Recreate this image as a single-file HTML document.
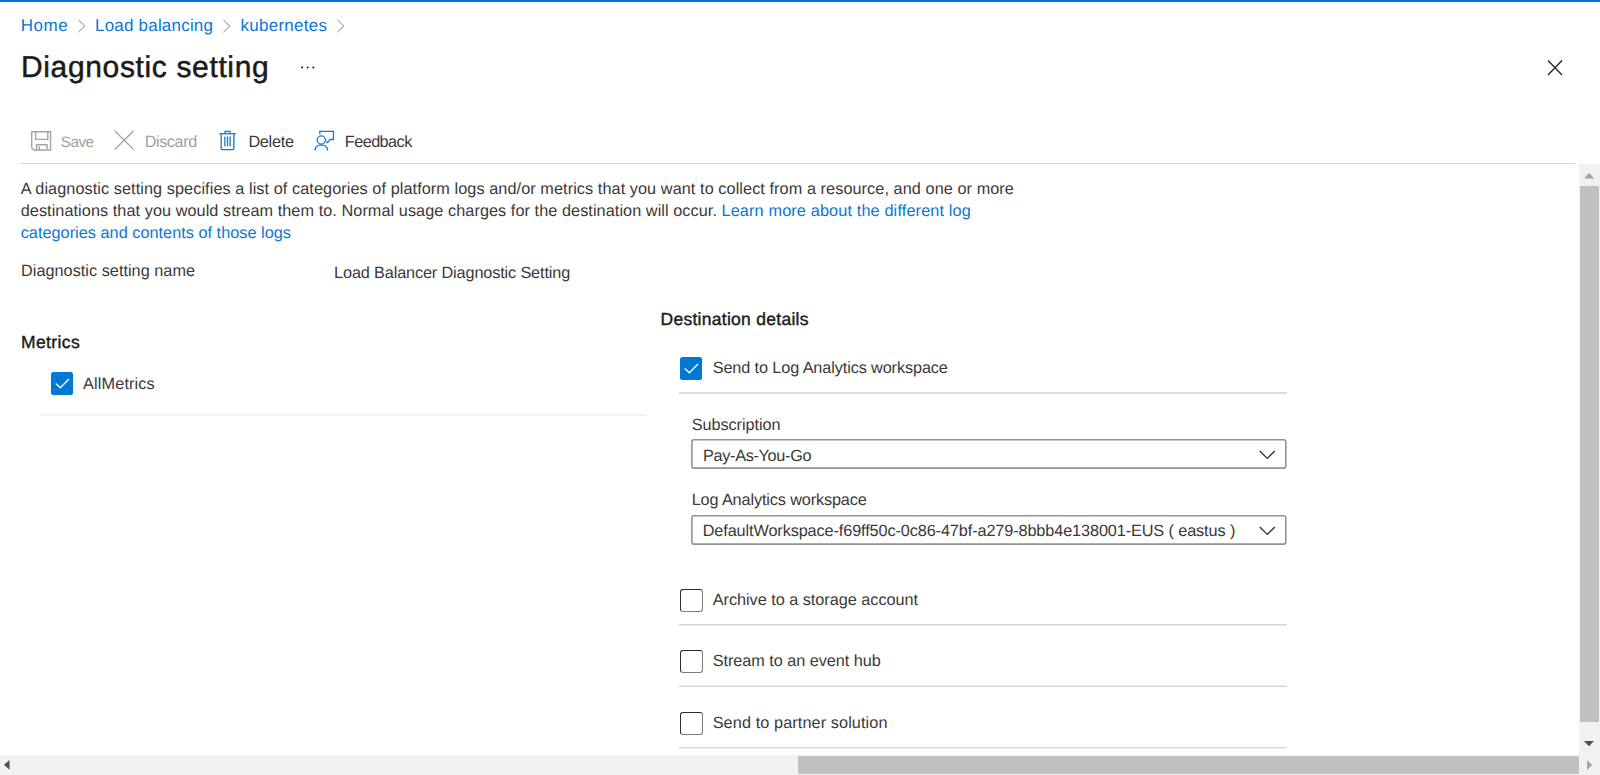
<!DOCTYPE html>
<html lang="en">
<head>
<meta charset="utf-8">
<title>Diagnostic setting</title>
<style>
html,body{margin:0;padding:0;}
body{width:1600px;height:775px;overflow:hidden;background:#fff;position:relative;font-family:"Liberation Sans",sans-serif;}
.t{position:absolute;white-space:nowrap;text-rendering:geometricPrecision;font-family:"Liberation Sans",sans-serif;font-weight:400;}
.t.sb{font-weight:400;-webkit-text-stroke:0.4px #1b1a19;}
.t.tw{font-weight:400;-webkit-text-stroke:0.5px #1f1e1d;}
.abs{position:absolute;}
.rule{position:absolute;height:1px;background:#d8d8d8;}
.cb{position:absolute;width:22.4px;height:22.5px;box-sizing:border-box;border-radius:2.5px;}
.cb.on{background:#0078d4;}
.cb.off{width:23px;height:23px;border:1px solid #2e2d2c;border-right-color:#7e7d7c;border-bottom-color:#7e7d7c;background:#fff;border-radius:3px;}
.sel{position:absolute;box-sizing:border-box;border:1.5px solid #858381;border-radius:3px;background:#fff;}
svg{position:absolute;overflow:visible;}
</style>
</head>
<body>
<!-- top accent bar -->
<div class="abs" style="left:0;top:0;width:1600px;height:2px;background:#0078d4;"></div>

<!-- breadcrumb chevrons -->
<svg style="left:77px;top:19px" width="10" height="14" viewBox="0 0 10 14"><path d="M1.5 1 L7.8 7 L1.5 13" fill="none" stroke="#858483" stroke-width="1.0"/></svg>
<svg style="left:222px;top:19px" width="10" height="14" viewBox="0 0 10 14"><path d="M1.5 1 L7.8 7 L1.5 13" fill="none" stroke="#858483" stroke-width="1.0"/></svg>
<svg style="left:336px;top:19px" width="10" height="14" viewBox="0 0 10 14"><path d="M1.5 1 L7.8 7 L1.5 13" fill="none" stroke="#858483" stroke-width="1.0"/></svg>

<!-- ellipsis -->
<svg style="left:300px;top:65px" width="16" height="5" viewBox="0 0 16 5"><circle cx="2.1" cy="2.5" r="0.95" fill="#111"/><circle cx="7.65" cy="2.5" r="0.95" fill="#111"/><circle cx="13.3" cy="2.5" r="0.95" fill="#111"/></svg>

<!-- close X -->
<svg style="left:1547px;top:60px" width="16" height="16" viewBox="0 0 16 16"><path d="M1 0.5 L15 15 M15 0.5 L1 15" fill="none" stroke="#1f1e1d" stroke-width="1.25"/></svg>

<!-- toolbar icons -->
<!-- save -->
<svg style="left:30.75px;top:130.6px" width="21" height="20" viewBox="0 0 21 20"><g fill="none" stroke="#a6a4a2" stroke-width="1.4"><path d="M0.7 0.7 H19.55 V18.95 H2.9 L0.7 16.8 Z"/><path d="M4.6 0.7 V8.4 H16.8 V0.7"/><path d="M5.5 18.95 V13.8 H16.1 V18.95"/><path d="M8.3 18.95 V15.2"/></g></svg>
<!-- discard X -->
<svg style="left:114px;top:130px" width="21" height="21" viewBox="0 0 21 21"><path d="M0.7 0.8 L19.7 19.6 M19.7 0.8 L0.7 19.6" fill="none" stroke="#a19f9d" stroke-width="1.3"/></svg>
<!-- trash -->
<svg style="left:219px;top:130px" width="18" height="21" viewBox="0 0 18 21"><g fill="none" stroke="#0f7ad6" stroke-width="1.3"><path d="M0.45 3.7 H16.85"/><path d="M6.05 3.7 V1.45 H11.05 V3.7"/><path d="M2.15 3.7 V18.6 Q2.15 19.55 3.1 19.55 H13.9 Q14.85 19.55 14.85 18.6 V3.7"/><path d="M5.9 6.4 V16.3 M8.5 6.4 V16.3 M11.1 6.4 V16.3"/></g></svg>
<!-- feedback -->
<svg style="left:313px;top:130px" width="22" height="21" viewBox="0 0 22 21"><g fill="none" stroke="#0f7ad6" stroke-width="1.3"><circle cx="8.3" cy="10" r="4.1"/><path d="M1.9 20.5 Q2.2 14.9 8.3 14.8 Q14.4 14.9 14.7 20.5"/><path d="M6.85 4.2 V1.45 H20.4 V9.5 H17.2 L14.6 12.6 L13.2 11.2"/></g></svg>

<!-- header rule -->
<div class="rule" style="left:21px;top:163px;width:1554px;background:#d6d6d6;"></div>

<!-- metrics -->
<div class="cb on" style="left:50.9px;top:372.2px"></div>
<svg style="left:50.9px;top:372.2px" width="22" height="22" viewBox="0 0 22 22"><path d="M4.8 11.6 L9.3 15.7 L18 7" fill="none" stroke="#fff" stroke-width="1.35"/></svg>
<div class="rule" style="left:39.5px;top:414px;width:607.8px;height:2px;background:linear-gradient(to bottom,#f3f2f1 0,#f3f2f1 50%,#f4f3f2 50%,#f4f3f2 100%);"></div>

<!-- destination -->
<div class="cb on" style="left:679.9px;top:357px"></div>
<svg style="left:679.9px;top:357px" width="22" height="22" viewBox="0 0 22 22"><path d="M4.8 11.6 L9.3 15.7 L18 7" fill="none" stroke="#fff" stroke-width="1.35"/></svg>
<div class="rule" style="left:679px;top:392px;width:608px;height:2px;background:linear-gradient(to bottom,#dadada 0,#dadada 50%,#dcdcdc 50%,#dcdcdc 100%);"></div>

<svg style="left:691.3px;top:439.0px" width="595.7" height="29.9" viewBox="0 0 595.7 29.9"><rect x="0.8" y="0.8" width="594.10" height="28.30" rx="2.2" ry="2.2" fill="#fff" stroke="#939291" stroke-width="1.6"/></svg>
<svg style="left:1259px;top:450px" width="17" height="10" viewBox="0 0 17 10"><path d="M0.8 1 L8.3 8.4 L15.8 1" fill="none" stroke="#323130" stroke-width="1.3"/></svg>
<svg style="left:691.3px;top:515.0px" width="595.7" height="29.9" viewBox="0 0 595.7 29.9"><rect x="0.8" y="0.8" width="594.10" height="28.30" rx="2.2" ry="2.2" fill="#fff" stroke="#939291" stroke-width="1.6"/></svg>
<svg style="left:1259px;top:526px" width="17" height="10" viewBox="0 0 17 10"><path d="M0.8 1 L8.3 8.4 L15.8 1" fill="none" stroke="#323130" stroke-width="1.3"/></svg>

<div class="cb off" style="left:680px;top:589px"></div>
<div class="rule" style="left:679px;top:624px;width:608px;height:2px;background:linear-gradient(to bottom,#d8d8d8 0,#d8d8d8 50%,#e8e8e8 50%,#e8e8e8 100%);"></div>
<div class="cb off" style="left:680px;top:650px"></div>
<div class="rule" style="left:679px;top:685px;width:608px;height:2px;background:linear-gradient(to bottom,#f0f0f0 0,#f0f0f0 50%,#d6d6d6 50%,#d6d6d6 100%);"></div>
<div class="cb off" style="left:680px;top:712px"></div>
<div class="rule" style="left:679px;top:747px;width:608px;height:2px;background:linear-gradient(to bottom,#d8d8d8 0,#d8d8d8 50%,#ececec 50%,#ececec 100%);"></div>

<span id="bc1" class="t" style="left:20.80px;top:13.51px;font-size:17px;line-height:24px;color:#0b76d3;letter-spacing:0.517px">Home</span>
<span id="bc2" class="t" style="left:95.00px;top:13.51px;font-size:17px;line-height:24px;color:#0b76d3;letter-spacing:0.205px">Load balancing</span>
<span id="bc3" class="t" style="left:240.50px;top:13.51px;font-size:17px;line-height:24px;color:#0b76d3;letter-spacing:0.264px">kubernetes</span>
<span id="title" class="t tw" style="left:21.00px;top:47.81px;font-size:30px;line-height:40px;color:#1b1a19;letter-spacing:0.641px">Diagnostic setting</span>
<span id="save" class="t" style="left:60.80px;top:130.93px;font-size:15.2px;line-height:24px;color:#a19f9d;letter-spacing:-0.477px">Save</span>
<span id="discard" class="t" style="left:144.70px;top:129.57px;font-size:16.25px;line-height:24px;color:#a19f9d;letter-spacing:-0.433px">Discard</span>
<span id="delete" class="t" style="left:248.40px;top:129.57px;font-size:16.25px;line-height:24px;color:#3a3938;letter-spacing:-0.275px">Delete</span>
<span id="feedback" class="t" style="left:344.80px;top:129.57px;font-size:16.25px;line-height:24px;color:#3a3938;letter-spacing:-0.553px">Feedback</span>
<span id="p1" class="t" style="left:20.70px;top:176.77px;font-size:16.25px;line-height:24px;color:#3a3938;letter-spacing:0.075px">A diagnostic setting specifies a list of categories of platform logs and/or metrics that you want to collect from a resource, and one or more</span>
<span id="p2a" class="t" style="left:20.70px;top:199.47px;font-size:16.25px;line-height:24px;color:#3a3938;letter-spacing:0.065px">destinations that you would stream them to. Normal usage charges for the destination will occur.</span>
<span id="p2b" class="t" style="left:721.50px;top:199.47px;font-size:16.25px;line-height:24px;color:#0b76d3;letter-spacing:0.145px">Learn more about the different log</span>
<span id="p3" class="t" style="left:20.70px;top:221.17px;font-size:16.25px;line-height:24px;color:#0b76d3;letter-spacing:0.030px">categories and contents of those logs</span>
<span id="dsn" class="t" style="left:21.00px;top:258.87px;font-size:16.25px;line-height:24px;color:#3a3938;letter-spacing:0.026px">Diagnostic setting name</span>
<span id="dsv" class="t" style="left:334.10px;top:261.17px;font-size:16.25px;line-height:24px;color:#3a3938;letter-spacing:-0.136px">Load Balancer Diagnostic Setting</span>
<span id="dest" class="t sb" style="left:660.50px;top:306.54px;font-size:17.5px;line-height:24px;color:#1b1a19;letter-spacing:0.277px">Destination details</span>
<span id="metrics" class="t sb" style="left:21.00px;top:330.14px;font-size:17.5px;line-height:24px;color:#1b1a19;letter-spacing:0.385px">Metrics</span>
<span id="allm" class="t" style="left:83.10px;top:371.57px;font-size:16.25px;line-height:24px;color:#3a3938;letter-spacing:0.131px">AllMetrics</span>
<span id="sendla" class="t" style="left:712.70px;top:355.97px;font-size:16.25px;line-height:24px;color:#3a3938;letter-spacing:-0.110px">Send to Log Analytics workspace</span>
<span id="sub" class="t" style="left:691.70px;top:413.17px;font-size:16.25px;line-height:24px;color:#3a3938;letter-spacing:-0.058px">Subscription</span>
<span id="payg" class="t" style="left:703.00px;top:443.57px;font-size:16.25px;line-height:24px;color:#3a3938;letter-spacing:-0.317px">Pay-As-You-Go</span>
<span id="law" class="t" style="left:691.70px;top:488.07px;font-size:16.25px;line-height:24px;color:#3a3938;letter-spacing:-0.130px">Log Analytics workspace</span>
<span id="ws" class="t" style="left:702.70px;top:518.57px;font-size:16.25px;line-height:24px;color:#3a3938;letter-spacing:-0.104px">DefaultWorkspace-f69ff50c-0c86-47bf-a279-8bbb4e138001-EUS ( eastus )</span>
<span id="arch" class="t" style="left:712.70px;top:587.57px;font-size:16.25px;line-height:24px;color:#3a3938;letter-spacing:-0.020px">Archive to a storage account</span>
<span id="stream" class="t" style="left:712.70px;top:648.97px;font-size:16.25px;line-height:24px;color:#3a3938;letter-spacing:-0.045px">Stream to an event hub</span>
<span id="partner" class="t" style="left:712.70px;top:711.37px;font-size:16.25px;line-height:24px;color:#3a3938;letter-spacing:0.098px">Send to partner solution</span>

<!-- vertical scrollbar -->
<div class="abs" style="left:1579px;top:164px;width:21px;height:591px;background:#f1f1f1;"></div>
<div class="abs" style="left:1580px;top:185.5px;width:19px;height:536.3px;background:#c1c1c1;"></div>
<svg style="left:1584.2px;top:172.6px" width="10.3" height="5.4" viewBox="0 0 10.3 5.4"><path d="M0 5.4 L5.15 0 L10.3 5.4 Z" fill="#a3a3a3"/></svg>
<svg style="left:1584.3px;top:741.2px" width="10" height="5.2" viewBox="0 0 10 5.2"><path d="M0 0 L5 5.2 L10 0 Z" fill="#505050"/></svg>
<!-- horizontal scrollbar -->
<div class="abs" style="left:0;top:754.5px;width:1600px;height:20.5px;background:#f1f1f1;"></div>
<div class="abs" style="left:798px;top:755.8px;width:780.7px;height:18px;background:#c1c1c1;"></div>
<svg style="left:3.8px;top:760.3px" width="5.6" height="9.7" viewBox="0 0 5.6 9.7"><path d="M5.6 0 L0 4.85 L5.6 9.7 Z" fill="#505050"/></svg>
<svg style="left:1586.8px;top:760.2px" width="5.2" height="10" viewBox="0 0 5.2 10"><path d="M0 0 L5.2 5 L0 10 Z" fill="#a3a3a3"/></svg>
</body>
</html>
